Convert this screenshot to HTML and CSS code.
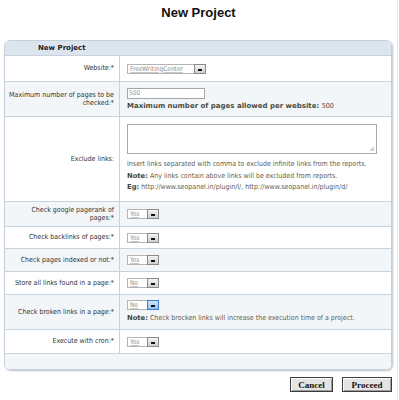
FILE: index.html
```html
<!DOCTYPE html>
<html>
<head>
<meta charset="utf-8">
<link rel="stylesheet" href="styles.css">
</head>
<body>
<div class="page">
  <h1 class="title">New Project</h1>
  <div class="panel">
    <div class="panel-head">New Project</div>

    <div class="row r-web">
      <div class="label"><span>Website:*</span></div>
      <div class="value">
        <span class="select sel-wide"><span class="sel-text">FreeWritingCenter</span><span class="sel-btn"></span></span>
      </div>
    </div>

    <div class="row alt r-max">
      <div class="label"><span>Maximum number of pages to be checked:*</span></div>
      <div class="value">
        <span class="input">500</span>
        <div class="strong-help">Maximum number of pages allowed per website: <span class="norm">500</span></div>
      </div>
    </div>

    <div class="row r-excl">
      <div class="label"><span>Exclude links:</span></div>
      <div class="value">
        <div class="textarea"><span class="grip"></span></div>
        <div class="help">Insert links separated with comma to exclude infinite links from the reports.</div>
        <div class="help"><b>Note:</b> Any links contain above links will be excluded from reports.</div>
        <div class="help"><b>Eg:</b> http://www.seopanel.in/plugin/l/, http://www.seopanel.in/plugin/d/</div>
      </div>
    </div>

    <div class="row alt r-pr">
      <div class="label"><span>Check google pagerank of pages:*</span></div>
      <div class="value">
        <span class="select"><span class="sel-text">Yes</span><span class="sel-btn"></span></span>
      </div>
    </div>

    <div class="row r-bl">
      <div class="label"><span>Check backlinks of pages:*</span></div>
      <div class="value">
        <span class="select"><span class="sel-text">Yes</span><span class="sel-btn"></span></span>
      </div>
    </div>

    <div class="row alt r-ix">
      <div class="label"><span>Check pages indexed or not:*</span></div>
      <div class="value">
        <span class="select"><span class="sel-text">Yes</span><span class="sel-btn"></span></span>
      </div>
    </div>

    <div class="row r-st">
      <div class="label"><span>Store all links found in a page:*</span></div>
      <div class="value">
        <span class="select"><span class="sel-text">No</span><span class="sel-btn"></span></span>
      </div>
    </div>

    <div class="row alt r-br">
      <div class="label"><span>Check broken links in a page:*</span></div>
      <div class="value">
        <span class="select focus"><span class="sel-text">No</span><span class="sel-btn"></span></span>
        <div class="help"><b>Note:</b> Check brocken links will increase the execution time of a project.</div>
      </div>
    </div>

    <div class="row r-cr">
      <div class="label"><span>Execute with cron:*</span></div>
      <div class="value">
        <span class="select"><span class="sel-text">Yes</span><span class="sel-btn"></span></span>
      </div>
    </div>

    <div class="panel-foot"></div>
  </div>

  <div class="actions">
    <button class="btn btn-cancel">Cancel</button>
    <button class="btn btn-proceed">Proceed</button>
  </div>
</div>
</body>
</html>
```

FILE: styles.css
```css
* { box-sizing: border-box; }
html, body { margin: 0; padding: 0; background: #fff; }
.page {
  width: 398px;
  height: 400px;
  border-right: 1px solid #e4e4e4;
  padding: 0 0 0 4px;
  font-family: "DejaVu Sans Condensed", "DejaVu Sans", sans-serif;
  font-size: 7px;
  color: #333;
  overflow: hidden;
}
.title {
  margin: 0;
  height: 40px;
  padding-top: 5px;
  text-align: center;
  font-family: "Liberation Sans", Arial, sans-serif;
  font-size: 13px;
  font-weight: bold;
  color: #111;
  line-height: 16px;
  margin-left: -4px;
}
.panel {
  width: 388px;
  border: 1px solid #c3d0dc;
  border-radius: 6px;
  overflow: hidden;
  box-shadow: 1px 1px 2px #b9c2cb;
}
.panel-head {
  height: 14px;
  background: #dce5ee;
  font-family: "DejaVu Sans", sans-serif;
  font-weight: bold;
  font-size: 7px;
  color: #222;
  padding-left: 33px;
  line-height: 14px;
}
.row {
  display: flex;
  border-top: 1px solid #c6d2de;
  background: #fff;
}
.row.alt { background: #f3f6f9; }
.label {
  width: 115px;
  flex: none;
  border-right: 1px solid #c6d2de;
  text-align: right;
  padding: 0 5px 0 2px;
  display: flex;
  align-items: center;
  justify-content: flex-end;
  line-height: 8.5px;
  color: #333;
}
.value {
  flex: 1;
  padding: 0 0 0 7px;
  display: flex;
  flex-direction: column;
  justify-content: center;
  align-items: flex-start;
}
.r-web { height: 26px; }
.r-max { height: 35px; }
.r-excl { height: 85px; }
.r-pr { height: 25px; }
.r-bl { height: 22px; }
.r-ix { height: 23px; }
.r-st { height: 23px; }
.r-br { height: 35px; }
.r-cr { height: 24px; }
.panel-foot {
  height: 16px;
  border-top: 1px solid #c6d2de;
  background: #f3f6f9;
}
.select {
  display: inline-flex;
  height: 10px;
  border: 1px solid #b4b4b4;
  background: #fff;
  align-items: stretch;
}
.sel-text {
  width: 19px;
  color: #8e8e8e;
  font-size: 6.5px;
  line-height: 9px;
  padding-left: 2px;
  text-decoration: underline;
  text-decoration-color: #c8c8c8;
}
.sel-wide .sel-text { width: 66px; }
.sel-btn {
  width: 12px;
  background: linear-gradient(#f4f4f4, #cfcfcf);
  border: 1px solid #8a8a8a;
  margin: -1px -1px -1px 0;
  position: relative;
}
.sel-btn::after {
  content: "";
  position: absolute;
  left: 3px;
  right: 3px;
  bottom: 2px;
  height: 2px;
  background: #111;
}
.select.focus .sel-btn {
  background: linear-gradient(#cfe6fb, #8fc2f0);
  border-color: #3d7bc5;
}
.input {
  display: block;
  width: 78px;
  height: 11px;
  border: 1px solid #a6a6a6;
  color: #9a9a9a;
  font-size: 6.5px;
  line-height: 9px;
  padding-left: 1px;
  background: #fff;
  margin-bottom: 3px;
}
.strong-help {
  font-family: "DejaVu Sans", sans-serif;
  font-weight: bold;
  color: #4b4b3e;
  font-size: 7px;
}
.strong-help .norm { font-weight: normal; font-family: "DejaVu Sans Condensed", sans-serif; }
.textarea {
  width: 250px;
  height: 30px;
  border: 1px solid #a9a9a9;
  background: #fff;
  position: relative;
  margin-bottom: 5px;
}
.grip {
  position: absolute;
  right: 2px;
  bottom: 2px;
  width: 5px;
  height: 5px;
  background:
    radial-gradient(circle, #999 0.6px, transparent 0.8px) 0 0 / 2px 2px;
  clip-path: polygon(100% 0, 100% 100%, 0 100%);
}
.help {
  color: #5e5e50;
  line-height: 11.5px;
  font-size: 7px;
}
.help b {
  font-family: "DejaVu Sans", sans-serif;
  font-size: 6.8px;
  color: #44443a;
}
.r-br .select { margin-bottom: 3px; }
.actions {
  width: 388px;
  display: flex;
  justify-content: flex-end;
  gap: 9px;
  margin-top: 7px;
}
.btn {
  height: 15px;
  padding: 0;
  background: #e4e4e4;
  border: 1px solid #3c3c3c;
  box-shadow: inset 1px 1px 0 #fff, inset -1px -1px 0 #9c9c9c;
  font-family: "Liberation Serif", "Times New Roman", serif;
  font-weight: bold;
  font-size: 9px;
  color: #111;
}
.btn-cancel { width: 43px; }
.btn-proceed { width: 50px; }
```
